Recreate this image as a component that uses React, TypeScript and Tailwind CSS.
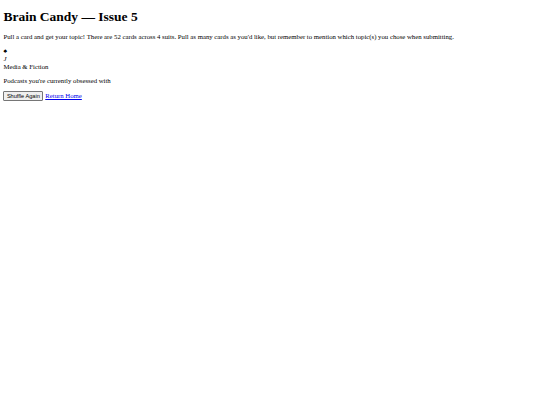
export default function App() {
  return (
    <div className="min-h-[405px] bg-white px-[3.4px] pb-[3.4px] pt-px text-[6.75px] leading-[1.15] text-black" style={{ fontFamily: '"Liberation Serif", serif' }}>
      <h1 className="mt-[8px] mb-[8.5px] text-[13.5px] font-bold leading-[1.15]">Brain Candy — Issue 5</h1>
      <p className="my-[6.5px]">
        Pull a card and get your topic! There are 52 cards across 4 suits. Pull as many cards as you'd like, but remember to
        mention which topic(s) you chose when submitting.
      </p>
      <div>
        <div>♠</div>
        <div className="italic">J</div>
        <div>Media &amp; Fiction</div>
        <p className="my-[6.5px]">Podcasts you're currently obsessed with</p>
      </div>
      <div className="flex items-center gap-[2px]">
        <button
          className="rounded-[1px] border border-[#767676] bg-[#efefef] px-[2.5px] py-[0.5px] text-[5.6px] leading-[1.2]"
          style={{ fontFamily: '"Liberation Sans", Arial, sans-serif' }}
        >
          Shuffle Again
        </button>
        <a href="#" className="text-[#0000ee] underline">
          Return Home
        </a>
      </div>
    </div>
  );
}
